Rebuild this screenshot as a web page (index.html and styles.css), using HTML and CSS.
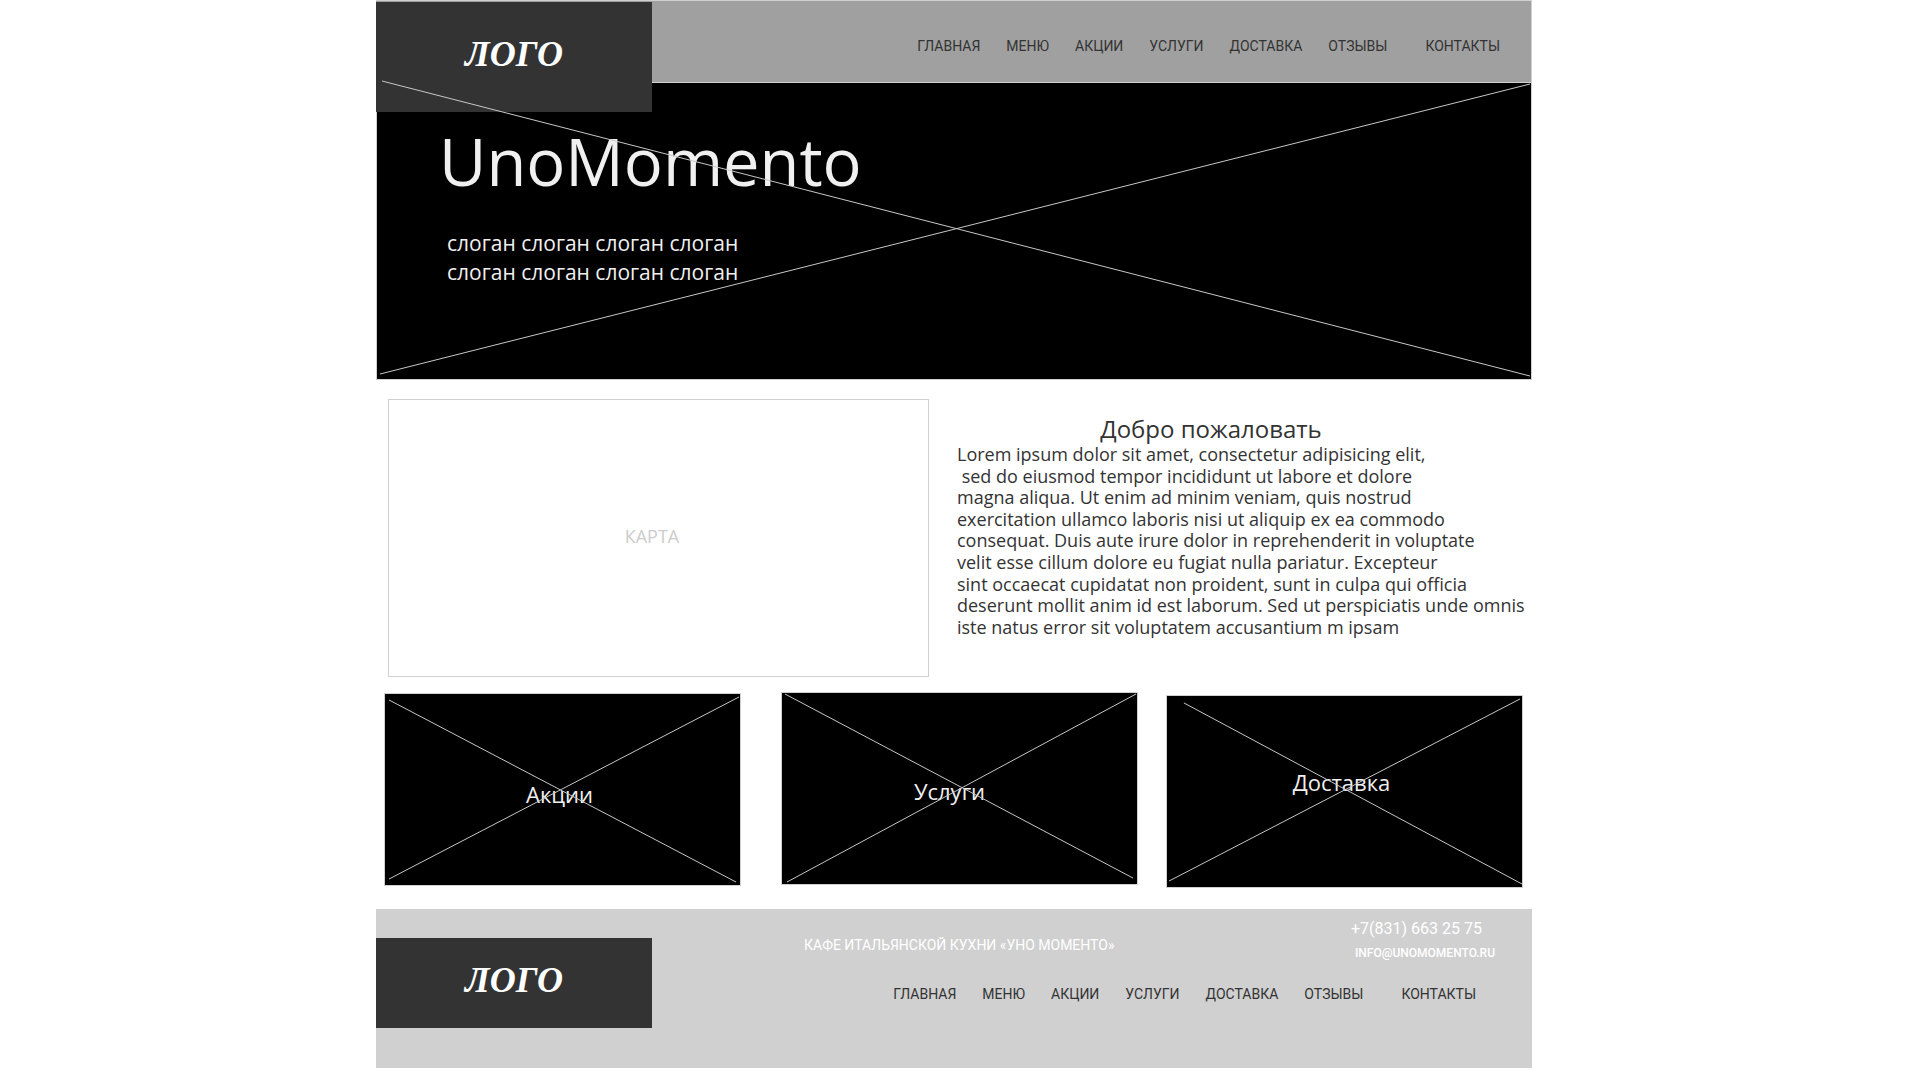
FILE: index.html
```html
<!DOCTYPE html>
<html lang="ru">
<head>
<meta charset="utf-8">
<meta name="viewport" content="width=device-width, initial-scale=1">
<title>UnoMomento</title>
<link rel="stylesheet" href="styles.css">
</head>
<body>
<div class="page">
  <header class="header">
    <a class="logo logo-header" href="#">ЛОГО</a>
    <nav class="nav" aria-label="Главное меню">
      <a href="#">ГЛАВНАЯ</a>
      <a href="#">МЕНЮ</a>
      <a href="#">АКЦИИ</a>
      <a href="#">УСЛУГИ</a>
      <a href="#">ДОСТАВКА</a>
      <a href="#">ОТЗЫВЫ</a>
      <a href="#">КОНТАКТЫ</a>
    </nav>
  </header>

  <section class="hero">
    <h1 class="hero-title">UnoMomento</h1>
    <p class="slogan">слоган слоган слоган слоган<br>слоган слоган слоган слоган</p>
    <svg class="cross" viewBox="0 0 1156 297" preserveAspectRatio="none" aria-hidden="true">
      <path d="M5 -2L1155 294M3 292L1155 1"/>
    </svg>
  </section>

  <main>
    <section class="intro">
      <div class="map">КАРТА</div>
      <div class="welcome">
        <h2 class="welcome-title">Добро пожаловать</h2>
        <p class="welcome-text">Lorem ipsum dolor sit amet, consectetur adipisicing elit,
 sed do eiusmod tempor incididunt ut labore et dolore
magna aliqua. Ut enim ad minim veniam, quis nostrud
exercitation ullamco laboris nisi ut aliquip ex ea commodo
consequat. Duis aute irure dolor in reprehenderit in voluptate
velit esse cillum dolore eu fugiat nulla pariatur. Excepteur
sint occaecat cupidatat non proident, sunt in culpa qui officia
deserunt mollit anim id est laborum. Sed ut perspiciatis unde omnis
iste natus error sit voluptatem accusantium m ipsam</p>
      </div>
    </section>

    <section class="cards">
      <a class="card card-promo" href="#">Акции
        <svg class="cross" viewBox="0 0 357 193" preserveAspectRatio="none" aria-hidden="true">
          <path d="M4 6L353 190M4 187L356 3"/>
        </svg>
      </a>
      <a class="card card-services" href="#">Услуги
        <svg class="cross" viewBox="0 0 357 193" preserveAspectRatio="none" aria-hidden="true">
          <path d="M3 1L353 187M5 191L356 1"/>
        </svg>
      </a>
      <a class="card card-delivery" href="#">Доставка
        <svg class="cross" viewBox="0 0 357 193" preserveAspectRatio="none" aria-hidden="true">
          <path d="M17 7L357 190M2 187L355 3"/>
        </svg>
      </a>
    </section>
  </main>

  <footer class="footer">
    <a class="logo logo-footer" href="#">ЛОГО</a>
    <div class="footer-body">
      <div class="footer-top">
        <p class="about">КАФЕ ИТАЛЬЯНСКОЙ КУХНИ «УНО МОМЕНТО»</p>
        <address class="contacts">
          <a class="phone" href="tel:+78316632575">+7(831) 663 25 75</a>
          <a class="email" href="mailto:info@unomomento.ru">INFO@UNOMOMENTO.RU</a>
        </address>
      </div>
      <nav class="nav nav-footer" aria-label="Меню в подвале">
        <a href="#">ГЛАВНАЯ</a>
        <a href="#">МЕНЮ</a>
        <a href="#">АКЦИИ</a>
        <a href="#">УСЛУГИ</a>
        <a href="#">ДОСТАВКА</a>
        <a href="#">ОТЗЫВЫ</a>
        <a href="#">КОНТАКТЫ</a>
      </nav>
    </div>
  </footer>
</div>
</body>
</html>
```
FILE: styles.css
```css
* {
  box-sizing: border-box;
}

body {
  margin: 0;
  padding-right: 12px;
  background: #fff;
  color: #333;
  font-family: "Open Sans", "Noto Sans", sans-serif;
}

h1, h2, p {
  margin: 0;
  font-weight: 400;
}

a {
  color: inherit;
  text-decoration: none;
}

.page {
  max-width: 1156px;
  margin: 0 auto;
}

/* Header */
.header {
  display: flex;
  justify-content: space-between;
  align-items: flex-start;
  height: 83px;
  border: solid #d0d0d0;
  border-width: 1px 1px 1px 0;
  background: #a0a0a0;
}

.logo {
  display: flex;
  justify-content: center;
  align-items: center;
  flex: 0 0 276px;
  padding-bottom: 6px;
  background: #333;
  color: #fff;
  font: italic 700 36px/48px "Liberation Serif", serif;
}

.logo-header {
  position: relative;
  z-index: 1;
  height: 110px;
  margin-top: 1px;
}

.nav {
  display: flex;
  gap: 26px;
  padding: 35px 31px 0 0;
  font: 400 14px/20px Roboto, sans-serif;
}

.nav a:last-child {
  margin-left: 12px;
}

/* Hero */
.hero {
  position: relative;
  min-height: 297px;
  padding: 32px 62px;
  border: solid #d0d0d0;
  border-width: 0 1px 1px;
  background: #000;
  color: #f0f0f0;
}

.hero-title {
  font-size: 65px;
  line-height: 92px;
}

.slogan {
  padding: 22px 8px 0;
  font-size: 21px;
  font-weight: 500;
  line-height: 29px;
}

.cross {
  position: absolute;
  z-index: 2;
  inset: 0;
  width: 100%;
  height: 100%;
  overflow: visible;
  fill: none;
  stroke: #c8c8c8;
  stroke-width: 1;
  pointer-events: none;
}

/* Map and welcome text */
.intro {
  display: flex;
  gap: 28px;
  padding: 19px 0 0 12px;
}

.map {
  display: flex;
  flex: 0 1 541px;
  justify-content: center;
  align-items: center;
  min-height: 278px;
  padding: 0 13px 4px 0;
  border: 1px solid #d0d0d0;
  color: #ccc;
  font-size: 18px;
}

.welcome {
  flex: 1;
  padding-top: 15px;
}

.welcome-title {
  padding-right: 67px;
  font-size: 24px;
  line-height: 30px;
  text-align: center;
}

.welcome-text {
  font-size: 18px;
  line-height: 1.2;
  white-space: pre-wrap;
}

/* Cards */
.cards {
  display: flex;
  align-items: flex-start;
  gap: 28px;
  padding: 15px 9px 21px 8px;
}

.card {
  position: relative;
  display: flex;
  flex: 0 1 357px;
  justify-content: center;
  height: 193px;
  padding-top: 84px;
  border: 1px solid #d0d0d0;
  background: #000;
  color: #f0f0f0;
  font-size: 22px;
  font-weight: 500;
  line-height: 32px;
}

.card-promo {
  margin: 1px 12px 0 0;
  padding-right: 6px;
}

.card-services {
  padding-top: 82px;
  padding-right: 20px;
}

.card-delivery {
  margin-top: 3px;
  padding-top: 70px;
  padding-right: 6px;
}

/* Footer */
.footer {
  display: flex;
  align-items: flex-start;
  min-height: 159px;
  background: #d0d0d0;
}

.logo-footer {
  height: 90px;
  margin-top: 29px;
}

.footer-body {
  flex: 1;
}

.footer-top {
  display: flex;
  justify-content: space-between;
  padding: 8px 37px 0 152px;
  color: #fff;
}

.about {
  padding-top: 18px;
  font: 400 14px/20px Roboto, sans-serif;
}

.contacts {
  display: flex;
  flex-direction: column;
  font: 400 16px/24px Roboto, sans-serif;
}

.email {
  padding-left: 4px;
  font-size: 12px;
  font-weight: 500;
}

.nav-footer {
  justify-content: flex-end;
  padding: 19px 56px 0 0;
}
```
